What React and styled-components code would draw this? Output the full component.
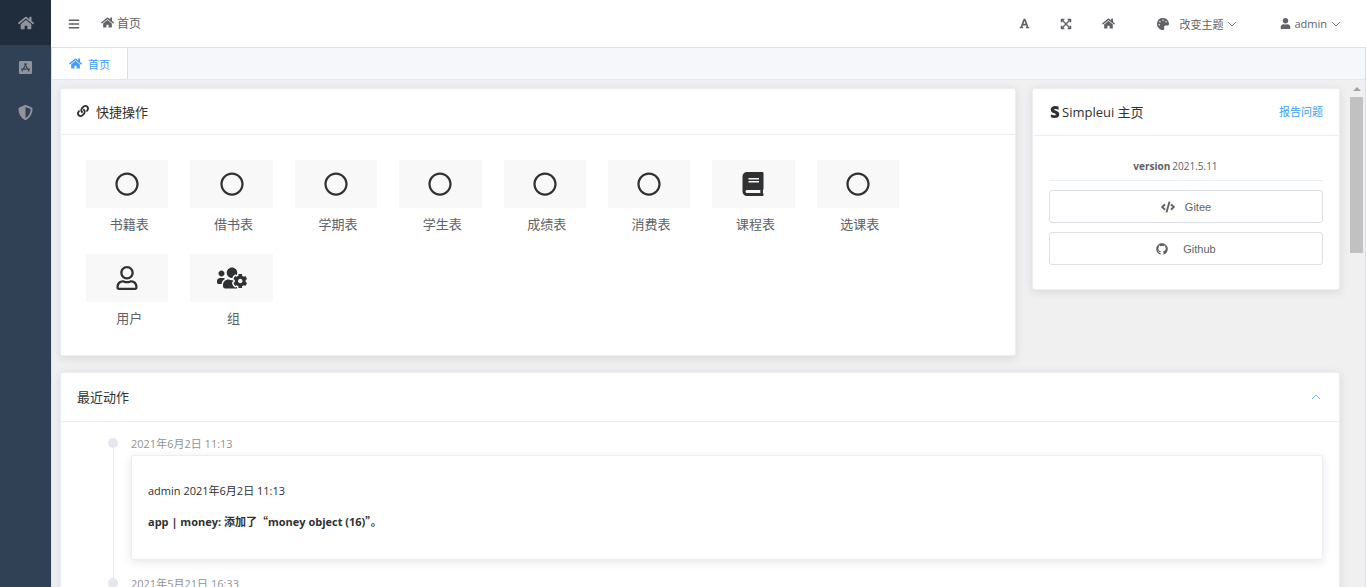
import React, { useState } from 'react';
import styled, { createGlobalStyle } from 'styled-components';
import {
  FaHome,
  FaAppStoreIos,
  FaShieldAlt,
  FaBars,
  FaFont,
  FaExpandArrowsAlt,
  FaPalette,
  FaUser,
  FaLink,
  FaStripeS,
  FaCode,
  FaGithub,
  FaBook,
  FaRegCircle,
  FaRegUser,
  FaUsersCog
} from 'react-icons/fa';

const menus = [
  { name: '首页', icon: FaHome },
  { name: '应用', icon: FaAppStoreIos },
  { name: '认证和授权', icon: FaShieldAlt }
];

const quickActions = [
  { name: '书籍表', icon: FaRegCircle },
  { name: '借书表', icon: FaRegCircle },
  { name: '学期表', icon: FaRegCircle },
  { name: '学生表', icon: FaRegCircle },
  { name: '成绩表', icon: FaRegCircle },
  { name: '消费表', icon: FaRegCircle },
  { name: '课程表', icon: FaBook },
  { name: '选课表', icon: FaRegCircle },
  { name: '用户', icon: FaRegUser },
  { name: '组', icon: FaUsersCog }
];

const actions = [
  {
    time: '2021年6月2日 11:13',
    user: 'admin',
    model: 'app | money:',
    verb: '添加了',
    object: 'money object (16)'
  },
  { time: '2021年5月21日 16:33' }
];

const Chevron = ({ up }) => (
  <ChevronIcon viewBox="0 0 10 6" aria-hidden="true">
    <path d={up ? 'M1 5 L5 1 L9 5' : 'M1 1 L5 5 L9 1'} />
  </ChevronIcon>
);

const App = () => {
  const [activeMenu, setActiveMenu] = useState(0);
  const [showActions, setShowActions] = useState(true);

  const toggleActionsHandler = () => {
    setShowActions(!showActions);
  };

  return (
    <Page>
      <GlobalStyle />
      <Sidebar>
        {menus.map(({ name, icon: Icon }, i) => (
          <MenuItem
            key={name}
            aria-label={name}
            $active={i === activeMenu}
            onClick={() => setActiveMenu(i)}
          >
            <Icon size={i === 0 ? 16 : 15} />
          </MenuItem>
        ))}
      </Sidebar>
      <Main>
        <Header>
          <ToolButton aria-label="菜单">
            <FaBars size={12} />
          </ToolButton>
          <Breadcrumb>
            <FaHome size={13} />
            首页
          </Breadcrumb>
          <Tools>
            <ToolButton aria-label="字体">
              <FaFont size={11} />
            </ToolButton>
            <ToolButton aria-label="全屏">
              <FaExpandArrowsAlt size={12} />
            </ToolButton>
            <ToolButton aria-label="主页">
              <FaHome size={13} />
            </ToolButton>
          </Tools>
          <Dropdown $gap={10}>
            <FaPalette size={12} />
            <span>
              改变主题
              <Chevron />
            </span>
          </Dropdown>
          <Dropdown $gap={3}>
            <FaUser size={11} />
            <span>
              admin
              <Chevron />
            </span>
          </Dropdown>
        </Header>
        <Workspace>
          <Tabs>
            <Tab href="#home">
              <FaHome size={13} />
              首页
            </Tab>
          </Tabs>
          <Viewport>
            <Content>
              <Card $span={3}>
                <CardHeader $height={46}>
                  <CardTitle $gap={7}>
                    <FaLink size={12} />
                    快捷操作
                  </CardTitle>
                </CardHeader>
                <QuickGrid>
                  {quickActions.map(({ name, icon: Icon }) => (
                    <QuickLink key={name} href="#quick">
                      <QuickIcon>
                        <Icon size={name === '组' ? 30 : 24} />
                      </QuickIcon>
                      <QuickName>{name}</QuickName>
                    </QuickLink>
                  ))}
                </QuickGrid>
              </Card>
              <Card $span={1}>
                <CardHeader $height={47}>
                  <CardTitle $gap={1}>
                    <FaStripeS size={12} />
                    Simpleui 主页
                  </CardTitle>
                  <ReportLink href="#report">报告问题</ReportLink>
                </CardHeader>
                <AboutBody>
                  <VersionTable>
                    <tbody>
                      <tr>
                        <th scope="row">version</th>
                        <td>2021.5.11</td>
                      </tr>
                    </tbody>
                  </VersionTable>
                  <RepoButton $gap={10}>
                    <FaCode size={14} />
                    Gitee
                  </RepoButton>
                  <RepoButton $gap={15}>
                    <FaGithub size={12} />
                    Github
                  </RepoButton>
                </AboutBody>
              </Card>
              <Card $span={4}>
                <CardHeader $height={49}>
                  <CardTitle>最近动作</CardTitle>
                  <CollapseButton
                    aria-label="收起"
                    onClick={toggleActionsHandler}
                  >
                    <Chevron up={showActions} />
                  </CollapseButton>
                </CardHeader>
                {showActions && (
                  <Timeline>
                    {actions.map(action => (
                      <TimelineItem key={action.time}>
                        <Rail />
                        <TimelineBody>
                          <Time>{action.time}</Time>
                          <ActionCard>
                            {action.object && (
                              <>
                                <p>
                                  {action.user} {action.time}
                                </p>
                                <strong>
                                  {action.model} {action.verb}
                                  <Quote>“</Quote>
                                  {action.object}
                                  <Quote>”</Quote>。
                                </strong>
                              </>
                            )}
                          </ActionCard>
                        </TimelineBody>
                      </TimelineItem>
                    ))}
                  </Timeline>
                )}
              </Card>
            </Content>
            <Scrollbar>
              <ScrollArrow />
              <ScrollThumb />
            </Scrollbar>
          </Viewport>
        </Workspace>
      </Main>
    </Page>
  );
};

export default App;

const GlobalStyle = createGlobalStyle`
  * {
    box-sizing: border-box;
  }

  body {
    margin: 0;
    overflow: hidden;
    color: #303133;
    font-family: 'Open Sans', 'Noto Sans CJK SC', sans-serif;
    font-size: 11px;
  }

  button {
    padding: 0;
    border: none;
    background: none;
    color: inherit;
    font: inherit;
    cursor: pointer;
  }

  a {
    color: inherit;
    text-decoration: none;
  }

  svg {
    flex-shrink: 0;
  }
`;

const Page = styled.div`
  display: flex;
  height: 100vh;
`;

const Sidebar = styled.nav`
  display: flex;
  flex-direction: column;
  flex: 0 0 51px;
  background-color: #304156;
`;

const MenuItem = styled.button`
  && {
    display: flex;
    align-items: center;
    justify-content: center;
    height: 45px;
    color: #909399;
    background-color: ${props => (props.$active ? '#1f2d3d' : 'transparent')};
  }
`;

const Main = styled.div`
  display: flex;
  flex-direction: column;
  flex: 1;
  min-width: 0;
`;

const Header = styled.header`
  display: flex;
  align-items: center;
  height: 47px;
  padding: 0 25px 0 17px;
  background-color: #fff;
  color: #606266;
`;

const ToolButton = styled.button`
  display: flex;
  align-items: center;
  justify-content: center;
  width: 12px;
`;

const Breadcrumb = styled.div`
  display: flex;
  align-items: center;
  gap: 3px;
  margin-left: 21px;
  padding-bottom: 2px;
  font-size: 12px;
`;

const Tools = styled.div`
  display: flex;
  gap: 30px;
  margin-left: auto;
`;

const Dropdown = styled.button`
  display: flex;
  align-items: center;
  gap: ${props => props.$gap}px;
  margin-left: 43px;

  span {
    display: flex;
    align-items: center;
    gap: 4px;
  }
`;

const ChevronIcon = styled.svg`
  width: 10px;
  height: 6px;
  fill: none;
  stroke: currentColor;
  stroke-width: 0.8;
`;

const Workspace = styled.div`
  display: flex;
  flex-direction: column;
  flex: 1;
  min-height: 0;
  border: 1px solid #dcdfe6;
  border-bottom: none;
`;

const Tabs = styled.div`
  display: flex;
  height: 32px;
  background-color: #f5f7fa;
  border-bottom: 1px solid #e4e7ed;
`;

const Tab = styled.a`
  display: flex;
  align-items: center;
  gap: 6px;
  padding: 0 17px;
  border-right: 1px solid #dcdfe6;
  background-color: #fff;
  color: #409eff;
`;

const Viewport = styled.div`
  display: flex;
  flex: 1;
  min-height: 0;
  background-color: #f0f0f0;
`;

const Content = styled.main`
  display: grid;
  grid-template-columns: repeat(4, 1fr);
  align-items: start;
  align-content: start;
  gap: 16px;
  flex: 1;
  min-width: 0;
  padding: 8px;
  overflow: hidden;
`;

const Card = styled.section`
  grid-column: span ${props => props.$span};
  border: 1px solid #ebeef5;
  border-radius: 3px;
  background-color: #fff;
  box-shadow: 0 2px 10px 0 rgba(0, 0, 0, 0.1);
`;

const CardHeader = styled.div`
  display: flex;
  align-items: center;
  justify-content: space-between;
  height: ${props => props.$height}px;
  padding: 0 16px;
  border-bottom: 1px solid #ebeef5;
`;

const CardTitle = styled.h2`
  display: flex;
  align-items: center;
  gap: ${props => props.$gap || 0}px;
  margin: 0;
  padding-bottom: 1px;
  font-size: 13px;
  font-weight: 400;
`;

const QuickGrid = styled.div`
  display: grid;
  grid-template-columns: repeat(auto-fill, minmax(82px, 1fr));
  gap: 20px 22px;
  padding: 25px 116px 27px 25px;
`;

const QuickLink = styled.a`
  display: block;
`;

const QuickIcon = styled.div`
  display: flex;
  align-items: center;
  justify-content: center;
  height: 48px;
  background-color: #f8f8f8;
`;

const QuickName = styled.div`
  margin-top: 6px;
  padding-left: 4px;
  color: #606266;
  font-size: 13px;
  line-height: 20px;
  text-align: center;
`;

const ReportLink = styled.a`
  padding-bottom: 2px;
  color: #409eff;
`;

const AboutBody = styled.div`
  display: flex;
  flex-direction: column;
  gap: 9px;
  padding: 16px 16px 24px;
`;

const VersionTable = styled.table`
  width: 100%;
  border-collapse: collapse;
  color: #606266;
  font-size: 10px;
  line-height: 28px;

  th,
  td {
    padding: 0;
    border-bottom: 1px solid #ebeef5;
  }

  th {
    width: 45%;
    padding-right: 2px;
    text-align: right;
  }
`;

const RepoButton = styled.button`
  && {
    display: flex;
    align-items: center;
    justify-content: center;
    gap: ${props => props.$gap}px;
    height: 33px;
    border: 1px solid #dcdfe6;
    border-radius: 3px;
    color: #606266;
    font-family: 'Liberation Sans', Arial, sans-serif;
  }
`;

const CollapseButton = styled.button`
  && {
    display: flex;
    padding: 2px;
    color: #409eff;
  }
`;

const Timeline = styled.ul`
  margin: 0;
  padding: 16px 16px 16px 47px;
  list-style: none;
`;

const TimelineItem = styled.li`
  display: flex;
  gap: 13px;
`;

const Rail = styled.div`
  display: flex;
  flex-direction: column;
  align-items: center;
  width: 10px;

  &::before {
    content: '';
    width: 10px;
    height: 10px;
    border-radius: 50%;
    background-color: #e4e7ed;
  }

  &::after {
    content: '';
    flex: 1;
    width: 1px;
    background-color: #e4e7ed;
  }
`;

const TimelineBody = styled.div`
  flex: 1;
  padding-bottom: 18px;
`;

const Time = styled.div`
  color: #909399;
  line-height: 12px;
`;

const ActionCard = styled.div`
  min-height: 105px;
  margin-top: 5px;
  padding: 26px 16px;
  border: 1px solid #ebeef5;
  border-radius: 3px;
  background-color: #fff;
  box-shadow: 0 2px 10px 0 rgba(0, 0, 0, 0.1);
  line-height: 18px;

  p {
    margin: 0 0 12px;
  }
`;

// full-width quotation marks only exist in the CJK face
const Quote = styled.span`
  font-family: 'Noto Sans CJK SC', sans-serif;
`;

const Scrollbar = styled.div`
  display: flex;
  flex-direction: column;
  align-items: center;
  flex: 0 0 17px;
  gap: 6px;
  padding-top: 7px;
`;

const ScrollArrow = styled.div`
  border: 4px solid transparent;
  border-top: none;
  border-bottom-color: #a3a3a3;
`;

const ScrollThumb = styled.div`
  width: 13px;
  height: 156px;
  background-color: #c1c1c1;
`;
